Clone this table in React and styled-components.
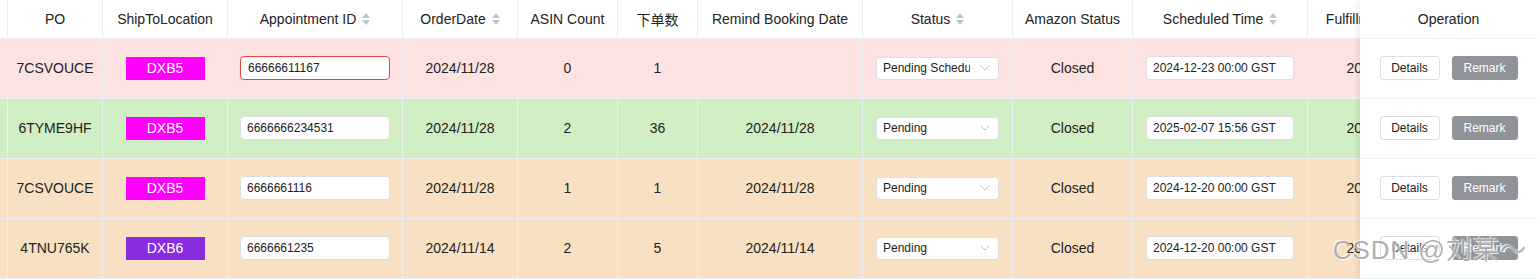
import React from 'react'
import styled, { createGlobalStyle, css } from 'styled-components';

const GlobalStyle = createGlobalStyle`
    html, body {
        margin: 0;
        padding: 0;
        background: #fff;
    }
    * {
        box-sizing: border-box;
    }
`;

const COLUMNS = '8px 95px 125px 175px 115px 100px 80px 165px 150px 120px 175px 148px';

const rowTones = {
    pink: '#fde2e2',
    green: '#d1edc4',
    orange: '#f8e1c3',
};

const StyledPage = styled.div`
    position: relative;
    width: 1537px;
    height: 279px;
    overflow: hidden;
    font-family: "Liberation Sans", Arial, "Noto Sans CJK SC", sans-serif;
    color: #222;
`;

const StyledTable = styled.div`
    display: flex;
    width: 100%;
`;

const StyledScrollArea = styled.div`
    flex: 1;
    min-width: 0;
    overflow: hidden;
`;

const StyledRow = styled.div`
    display: grid;
    grid-template-columns: ${COLUMNS};
    width: max-content;
    height: ${({ $header }) => $header ? '39px' : '60px'};
    border-bottom: 1px solid #ebeef5;
    background: ${({ $tone }) => $tone ? rowTones[$tone] : '#fff'};
`;

const StyledCell = styled.div`
    display: flex;
    align-items: center;
    justify-content: center;
    padding-bottom: 1px;
    border-right: 1px solid #ebeef5;
    font-size: 14px;
    white-space: nowrap;
    overflow: hidden;
`;

const StyledHeadLabel = styled.span`
    display: inline-flex;
    align-items: center;
    gap: 6px;
    font-size: 14px;
`;

const StyledSortIcon = styled.span`
    display: inline-flex;
    flex-direction: column;
    gap: 2px;
    &::before, &::after {
        content: "";
        width: 0;
        height: 0;
        border-left: 4.5px solid transparent;
        border-right: 4.5px solid transparent;
    }
    &::before {
        border-bottom: 5px solid #c0c4cc;
    }
    &::after {
        border-top: 5px solid #c0c4cc;
    }
`;

const StyledBadge = styled.span`
    display: flex;
    align-items: center;
    justify-content: center;
    width: 79px;
    height: 23px;
    color: #fff;
    font-size: 14px;
    background: ${({ $color }) => $color};
`;

const StyledInput = styled.input`
    width: ${({ $width }) => $width}px;
    height: 24px;
    padding: 0 6px;
    border: 1px solid #dcdfe6;
    border-radius: 4px;
    background: #fff;
    font-family: inherit;
    font-size: 12px;
    color: #222;
    outline: none;
    ${({ $invalid }) => $invalid && css`
        border-color: #e8453c;
        padding-left: 7px;
    `}
`;

const StyledSelect = styled.div`
    display: flex;
    align-items: center;
    width: 123px;
    height: 23px;
    padding: 0 8px 0 6px;
    border: 1px solid #dcdfe6;
    border-radius: 4px;
    background: #fff;
    font-size: 12px;
`;

const StyledSelectValue = styled.span`
    flex: 1;
    min-width: 0;
    margin-right: 10px;
    overflow: hidden;
    white-space: nowrap;
    text-align: left;
`;

const StyledFixedColumn = styled.div`
    width: 177px;
    flex-shrink: 0;
    background: #fff;
    box-shadow: -3px 0 6px rgba(0, 0, 0, 0.07);
    position: relative;
    z-index: 1;
`;

const StyledFixedCell = styled.div`
    display: flex;
    align-items: center;
    justify-content: center;
    gap: 12px;
    height: ${({ $header }) => $header ? '39px' : '60px'};
    padding-bottom: 1px;
    border-bottom: 1px solid #ebeef5;
    font-size: 14px;
`;

const StyledButton = styled.button`
    width: ${({ $variant }) => $variant === 'info' ? '66px' : '60px'};
    height: 24px;
    padding: 0;
    border-radius: 3px;
    font-family: inherit;
    font-size: 12px;
    cursor: pointer;
    ${({ $variant }) => $variant === 'info' ? css`
        border: 1px solid #909399;
        background: #909399;
        color: #fff;
        font-weight: 500;
    ` : css`
        border: 1px solid #dcdfe6;
        background: #fff;
        color: #222;
    `}
`;

// CSDN 水印
const StyledWatermark = styled.div`
    position: absolute;
    right: 10px;
    top: 237px;
    font-family: "Liberation Sans", "Noto Sans CJK SC", sans-serif;
    font-size: 26px;
    line-height: 26px;
    letter-spacing: 1px;
    color: rgba(150, 150, 150, 0.75);
    text-shadow: 1px 1px 1px rgba(255, 255, 255, 0.9), -1px -1px 1px rgba(255, 255, 255, 0.7);
    pointer-events: none;
    z-index: 2;
`;

const headers = [
    { label: '' },
    { label: 'PO' },
    { label: 'ShipToLocation' },
    { label: 'Appointment ID', sortable: true },
    { label: 'OrderDate', sortable: true },
    { label: 'ASIN Count' },
    { label: '下单数' },
    { label: 'Remind Booking Date' },
    { label: 'Status', sortable: true },
    { label: 'Amazon Status' },
    { label: 'Scheduled Time', sortable: true },
    { label: 'Fulfillment Date', sortable: true },
];

const locationColors = {
    DXB5: '#ff00ff',
    DXB6: '#8a2be2',
};

const shipments = [
    { po: '7CSVOUCE', location: 'DXB5', appointmentId: '66666611167', invalid: true, orderDate: '2024/11/28', asinCount: 0, quantity: 1, remindDate: '', status: 'Pending Scheduling', amazonStatus: 'Closed', scheduledTime: '2024-12-23 00:00 GST', fulfillmentDate: '2024/12/23', tone: 'pink' },
    { po: '6TYME9HF', location: 'DXB5', appointmentId: '6666666234531', orderDate: '2024/11/28', asinCount: 2, quantity: 36, remindDate: '2024/11/28', status: 'Pending', amazonStatus: 'Closed', scheduledTime: '2025-02-07 15:56 GST', fulfillmentDate: '2025/02/07', tone: 'green' },
    { po: '7CSVOUCE', location: 'DXB5', appointmentId: '6666661116', orderDate: '2024/11/28', asinCount: 1, quantity: 1, remindDate: '2024/11/28', status: 'Pending', amazonStatus: 'Closed', scheduledTime: '2024-12-20 00:00 GST', fulfillmentDate: '2024/12/20', tone: 'orange' },
    { po: '4TNU765K', location: 'DXB6', appointmentId: '6666661235', orderDate: '2024/11/14', asinCount: 2, quantity: 5, remindDate: '2024/11/14', status: 'Pending', amazonStatus: 'Closed', scheduledTime: '2024-12-20 00:00 GST', fulfillmentDate: '2025/12/20', tone: 'orange' },
];

const Chevron = () => (
    <svg width="10" height="6" viewBox="0 0 10 6" fill="none">
        <path d="M0.5 0.5 L5 5 L9.5 0.5" stroke="#c0c4cc" strokeWidth="1" />
    </svg>
);

const ShipmentRow = ({ shipment }) => {
    const { po, location, appointmentId, invalid, orderDate, asinCount, quantity, remindDate, status, amazonStatus, scheduledTime, fulfillmentDate, tone } = shipment;
    return (
        <StyledRow $tone={tone}>
            <StyledCell />
            <StyledCell>{po}</StyledCell>
            <StyledCell><StyledBadge $color={locationColors[location]}>{location}</StyledBadge></StyledCell>
            <StyledCell><StyledInput $width={150} $invalid={invalid} defaultValue={appointmentId} /></StyledCell>
            <StyledCell>{orderDate}</StyledCell>
            <StyledCell>{asinCount}</StyledCell>
            <StyledCell>{quantity}</StyledCell>
            <StyledCell>{remindDate}</StyledCell>
            <StyledCell>
                <StyledSelect>
                    <StyledSelectValue>{status}</StyledSelectValue>
                    <Chevron />
                </StyledSelect>
            </StyledCell>
            <StyledCell>{amazonStatus}</StyledCell>
            <StyledCell><StyledInput $width={148} defaultValue={scheduledTime} /></StyledCell>
            <StyledCell>{fulfillmentDate}</StyledCell>
        </StyledRow>
    );
};

const App = () => {
    return (
        <>
            <GlobalStyle />
            <StyledPage>
                <StyledTable>
                    <StyledScrollArea>
                        <StyledRow $header>
                            {headers.map(({ label, sortable }, idx) => (
                                <StyledCell key={idx}>
                                    <StyledHeadLabel>
                                        {label}
                                        {sortable && <StyledSortIcon />}
                                    </StyledHeadLabel>
                                </StyledCell>
                            ))}
                        </StyledRow>
                        {shipments.map((shipment, idx) => <ShipmentRow shipment={shipment} key={idx} />)}
                    </StyledScrollArea>
                    <StyledFixedColumn>
                        <StyledFixedCell $header>Operation</StyledFixedCell>
                        {shipments.map((shipment, idx) => (
                            <StyledFixedCell key={idx}>
                                <StyledButton>Details</StyledButton>
                                <StyledButton $variant="info">Remark</StyledButton>
                            </StyledFixedCell>
                        ))}
                    </StyledFixedColumn>
                </StyledTable>
                <StyledWatermark>CSDN @刘某～</StyledWatermark>
            </StyledPage>
        </>
    );
};

export default App;
